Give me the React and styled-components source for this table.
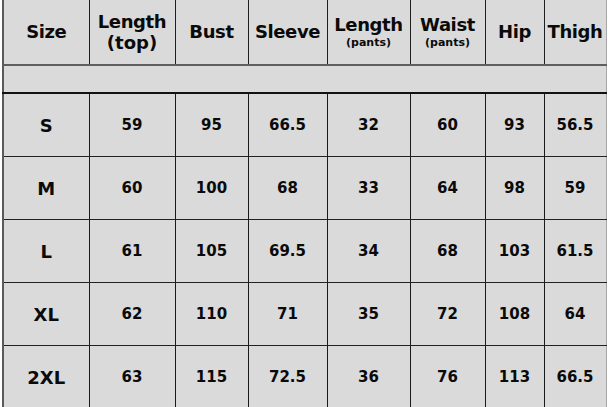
import React from 'react'
import styled, { createGlobalStyle } from 'styled-components'

const GlobalStyle = createGlobalStyle`
  html, body {
    margin: 0;
    padding: 0;
    background: #ffffff;
    overflow: hidden;
  }
  body {
    font-family: "Comic Sans MS", "DejaVu Sans", sans-serif;
  }
`;

const columns = [
  { width: 86, title: 'Size' },
  { width: 86, title: 'Length', sub: '(top)', big: true },
  { width: 73, title: 'Bust' },
  { width: 79, title: 'Sleeve' },
  { width: 83, title: 'Length', sub: '(pants)' },
  { width: 75, title: 'Waist', sub: '(pants)' },
  { width: 59, title: 'Hip' },
  { width: 62, title: 'Thigh' },
];

const rows = [
  ['S', '59', '95', '66.5', '32', '60', '93', '56.5'],
  ['M', '60', '100', '68', '33', '64', '98', '59'],
  ['L', '61', '105', '69.5', '34', '68', '103', '61.5'],
  ['XL', '62', '110', '71', '35', '72', '108', '64'],
  ['2XL', '63', '115', '72.5', '36', '76', '113', '66.5'],
];

export default function App() {
  return (
    <>
      <GlobalStyle />
      <Chart>
        <colgroup>
          {columns.map((c, i) => <col key={i} style={{ width: c.width }} />)}
        </colgroup>
        <thead>
          <tr>
            {columns.map((c, i) => (
              <HeadCell key={i}>
                <HeadTitle>{c.title}</HeadTitle>
                {c.sub && <HeadSub big={c.big}>{c.sub}</HeadSub>}
              </HeadCell>
            ))}
          </tr>
        </thead>
        <tbody>
          <tr>
            <SpacerCell colSpan={8} />
          </tr>
          {rows.map((r, i) => (
            <tr key={i}>
              {r.map((v, j) => (
                <DataCell key={j} first={j === 0}>{v}</DataCell>
              ))}
            </tr>
          ))}
        </tbody>
      </Chart>
    </>
  );
}

const Chart = styled.table`
  table-layout: fixed;
  border-collapse: collapse;
  width: 603px;
  margin-left: 2px;
  background: #dadada;
  color: #0a0a0a;
  border-left: 2px solid #5a5a5a;
  border-right: 1px solid #a8a8a8;
`;

const HeadCell = styled.th`
  height: 64px;
  padding: 0;
  text-align: center;
  vertical-align: middle;
  font-weight: bold;
  border-left: 1px solid #1e1e1e;
  border-bottom: 2px solid #5e5e5e;
  line-height: 1.1;
  &:first-child {
    border-left: none;
  }
`;

const HeadTitle = styled.div`
  font-size: 18px;
  letter-spacing: -0.4px;
`;

const HeadSub = styled.div`
  font-size: ${props => props.big ? '18px' : '11px'};
  margin-top: ${props => props.big ? '1px' : '3px'};
`;

const SpacerCell = styled.td`
  height: 26px;
  padding: 0;
  border-bottom: 2px solid #111111;
`;

const DataCell = styled.td`
  height: 62px;
  padding: 0;
  text-align: center;
  vertical-align: middle;
  font-weight: bold;
  font-size: ${props => props.first ? '18px' : '15px'};
  border-left: 1px solid #1a1a1a;
  border-bottom: 1px solid #222222;
  &:first-child {
    border-left: none;
  }
`;
